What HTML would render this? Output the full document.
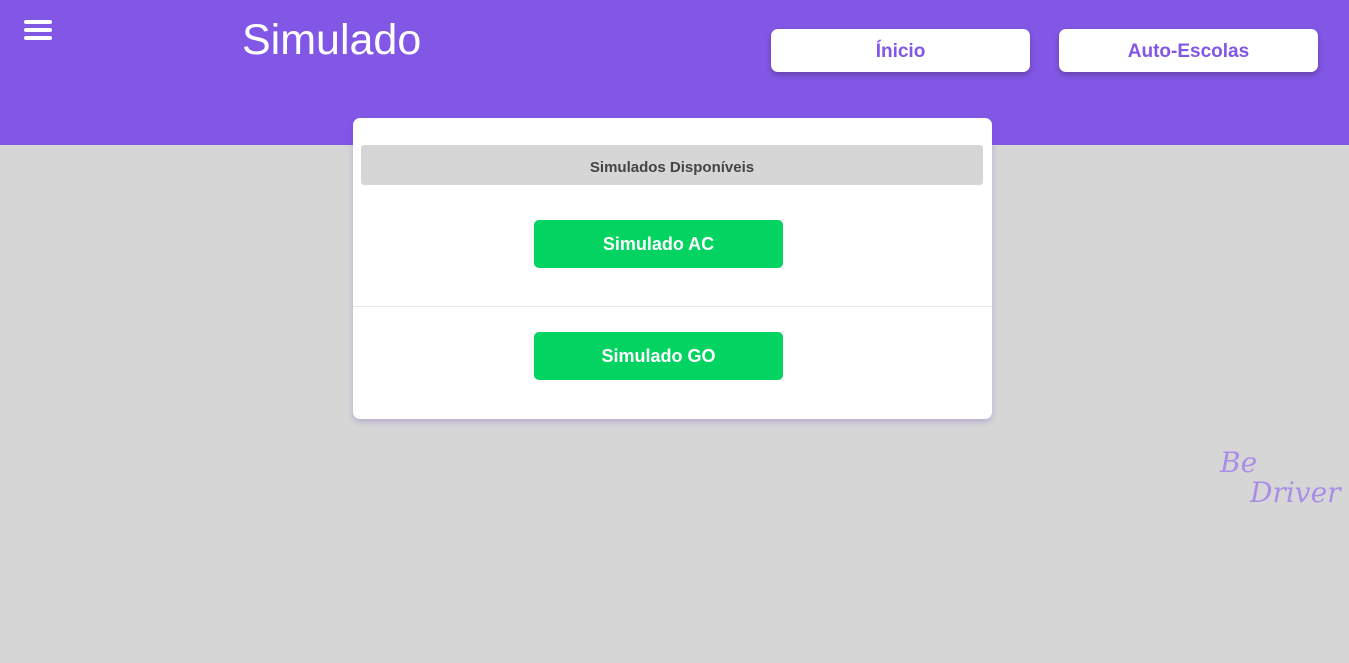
<!DOCTYPE html>
<html><head><meta charset="utf-8"><style>
*{margin:0;padding:0;box-sizing:border-box}
body{width:1349px;height:663px;background:#d6d6d6;font-family:"Liberation Sans",sans-serif;position:relative;overflow:hidden}
.hdr{position:absolute;left:0;top:0;width:1349px;height:145px;background:#8257e5}
.burger{position:absolute;left:24px;top:20px;width:28px}
.burger i{display:block;height:4px;background:#fff;border-radius:2px;margin-bottom:4px}
.title{position:absolute;left:242px;top:16px;color:#fff;font-size:43px}
.nb{position:absolute;top:29px;height:43px;width:259px;background:#fff;border-radius:7px;box-shadow:0 3px 6px rgba(0,0,0,.25);color:#8257e5;font-weight:bold;font-size:19px;text-align:center;line-height:45px}
.card{position:absolute;left:353px;top:118px;width:639px;height:301px;background:#fff;border-radius:7px;box-shadow:0 3px 6px rgba(100,60,200,.25)}
.bar{position:absolute;left:8px;top:27px;width:622px;height:40px;background:#d6d6d6;border-radius:3px;text-align:center;line-height:46px;font-size:15px;font-weight:bold;color:#444}
.btn{position:absolute;left:181px;width:249px;height:48px;background:#03d361;border-radius:5px;color:#fff;font-weight:bold;font-size:18px;text-align:center;line-height:48px}
.sep{position:absolute;left:0;top:188px;width:639px;height:1px;background:#e6e6e6}
.wm{position:absolute;font-family:"DejaVu Serif",serif;font-style:italic;color:#a98ee8;font-size:28px}
</style></head><body>
<div class="hdr">
<div class="burger"><i></i><i></i><i></i></div>
<div class="title">Simulado</div>
<div class="nb" style="left:771px">Ínicio</div>
<div class="nb" style="left:1059px">Auto-Escolas</div>
</div>
<div class="card">
<div class="bar">Simulados Disponíveis</div>
<div class="btn" style="top:102px">Simulado AC</div>
<div class="sep"></div>
<div class="btn" style="top:214px">Simulado GO</div>
</div>
<div class="wm" style="left:1220px;top:446px">Be</div>
<div class="wm" style="left:1250px;top:476px">Driver</div>
</body></html>
